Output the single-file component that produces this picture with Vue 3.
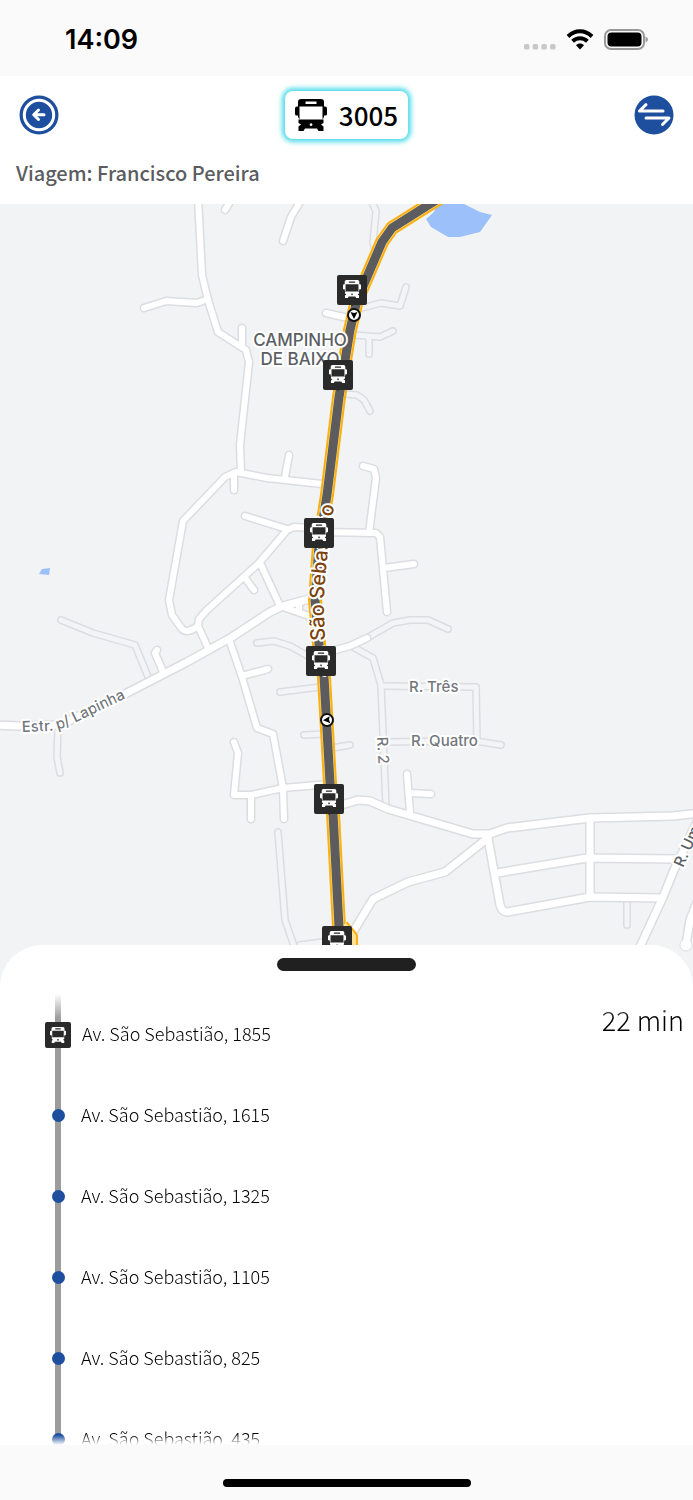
<template>
  <div class="screen">
    <svg class="symbols" aria-hidden="true">
      <symbol id="bus" viewBox="0 0 32 32">
        <path
          fill="currentColor"
          fill-rule="evenodd"
          d="M6 0h20q3 0 3 3v4.500h1q2 0 2 2V15q0 1.500-1.500 1.500H29V18l-1.500 2.500h-23L3 18v-1.500H1.500Q0 16.500 0 15V9.500q0-2 2-2h1V3q0-3 3-3zM10.500 2.500v2.500h11V2.500zM4.500 7.500v13h23v-13z"
        />
        <path
          fill="currentColor"
          fill-rule="evenodd"
          d="M3.500 20.500h25V24L26 25.500l2.500 2V32h-5l-1.500-2.500H10L8.500 32h-5v-4.500l2.500-2L3.500 24zM16 24.200a1.400 1.400 0 1 0 .1 0z"
        />
      </symbol>
    </svg>

    <div class="status">
      <span class="clock">14:09</span>
      <div class="status-icons">
        <svg class="signal" viewBox="0 0 32 6">
          <rect v-for="n in 4" :key="n" :x="(n - 1) * 8.7" width="5.400" height="5.400" rx="1.500" />
        </svg>
        <svg class="wifi" viewBox="0 0 28 21">
          <path d="M2 7.500C9 .6 19 .6 26 7.500" />
          <path d="M6.600 12.300c4.300-4 10.500-4 14.800 0" />
          <path class="wifi-dot" d="M14 20.500l-4-4.200c2-2.400 6-2.400 8 0z" />
        </svg>
        <svg class="battery" viewBox="0 0 45 21">
          <rect class="battery-case" x="1" y="1" width="39" height="19" rx="6" />
          <rect x="3.500" y="3.500" width="34" height="14" rx="4" />
          <path class="battery-tip" d="M41.500 7.500q2.500 1 2.500 3t-2.500 3z" />
        </svg>
      </div>
    </div>

    <header class="header">
      <div class="bar">
        <button class="round-btn" aria-label="Voltar">
          <svg viewBox="-20 -20 40 40">
            <circle class="blue" r="19.500" />
            <circle class="ring" r="14.700" />
            <path class="back-arrow" d="M5-.3H-5M-.5-5-5.300-.3-.5 4.500" />
          </svg>
        </button>
        <div class="line-badge">
          <svg><use href="#bus" /></svg>
          <span>3005</span>
        </div>
        <button class="round-btn" aria-label="Inverter sentido">
          <svg viewBox="-20 -20 40 40">
            <circle class="blue" r="19.500" />
            <path class="swap-arrow" d="M9-4H-14.500L-8-10.300M-8 3H15L8.500 9.500" />
          </svg>
        </button>
      </div>
      <p class="trip">Viagem: Francisco Pereira</p>
    </header>

    <svg class="map" viewBox="0 204 693 790">
      <path class="water" d="M436 204h28l16 8 12 3-12 17-20 5h-12l-17-10-5-8 8-7z" />
      <path class="water" d="M39 574l3-5 8-1-1 7z" />

      <g class="casing minor"><path v-for="d in minorRoads" :key="d" :d="d" /></g>
      <g class="fill minor"><path v-for="d in minorRoads" :key="d" :d="d" /></g>
      <g class="casing street"><path v-for="d in streets" :key="d" :d="d" /></g>
      <g class="casing main"><path v-for="d in mainRoads" :key="d" :d="d" /></g>
      <circle class="cul-de-sac" cx="686" cy="945" r="6" />
      <g class="fill street"><path v-for="d in streets" :key="d" :d="d" /></g>
      <g class="fill main"><path v-for="d in mainRoads" :key="d" :d="d" /></g>

      <path class="avenue-edge" :d="avenue" />
      <path class="avenue-edge" d="M342 926L351 937V960" />
      <path class="avenue-fill" :d="avenue" />
      <path class="avenue-fill" d="M342 926L351 937V960" />
      <path class="route" :d="avenue" />

      <path id="sebastiao" fill="none" d="M324 700L325 640Q323 600 325 580L328 550L334 505" />
      <path id="lapinha" fill="none" d="M22 732L48 731Q60 730 70 725L128 697" />

      <g class="label district">
        <text x="300" y="346">CAMPINHO</text>
        <text x="300" y="365">DE BAIXO</text>
      </g>
      <g class="label">
        <text x="409" y="692">R. Três</text>
        <text x="411" y="746">R. Quatro</text>
        <text transform="translate(377 737) rotate(87)">R. 2</text>
        <text class="dark" transform="translate(683 868) rotate(-66)">R. Um</text>
        <text><textPath href="#lapinha">Estr. p/ Lapinha</textPath></text>
      </g>
      <text class="label avenue-name">
        <textPath href="#sebastiao" startOffset="100%">Av. São Sebastião</textPath>
      </text>

      <g v-for="a in arrows" :key="a.y" :transform="`translate(${a.x} ${a.y}) rotate(${a.turn})`">
        <circle class="arrow-disc" r="6" />
        <path d="M0 4L-3.500-3 0-2 3.500-3z" />
      </g>
      <g v-for="p in pins" :key="p.y" :transform="`translate(${p.x} ${p.y})`">
        <path class="pin" d="M2 0h26q2 0 2 2v26q0 2-2 2H16l-1 1-1-1H2q-2 0-2-2V2q0-2 2-2z" />
        <use class="pin-bus" href="#bus" x="6" y="5" width="18" height="18" />
      </g>
    </svg>

    <section class="sheet">
      <button class="handle" aria-label="Expandir paradas"></button>
      <div class="panel">
        <ul class="stops">
          <li v-for="(stop, i) in stops" :key="stop" :class="{ current: i === 0 }">
            <span class="mark">
              <span v-if="i === 0" class="stop-bus"><svg><use href="#bus" /></svg></span>
              <span v-else class="dot"></span>
            </span>
            <span class="address">{{ stop }}</span>
          </li>
        </ul>
        <span class="eta">22 min</span>
      </div>
    </section>

    <footer class="home"><span class="home-bar"></span></footer>
  </div>
</template>

<script setup>
import { ref } from "vue";

const stops = ref([
  "Av. São Sebastião, 1855",
  "Av. São Sebastião, 1615",
  "Av. São Sebastião, 1325",
  "Av. São Sebastião, 1105",
  "Av. São Sebastião, 825",
  "Av. São Sebastião, 435",
]);

const pins = [
  { x: 337, y: 275 },
  { x: 323, y: 360 },
  { x: 304, y: 518 },
  { x: 306, y: 646 },
  { x: 314, y: 784 },
  { x: 322, y: 926 },
];

const arrows = [
  { x: 354, y: 315, turn: 0 },
  { x: 327, y: 720, turn: 85 },
];

const avenue =
  "M446 194L430 204L392 228L382 242L367 277L357 300L350 330L339 397L327 495L319 545L315 600L320 655L324 677L330 783L333 813L339 927L341 960";

// unpaved lanes, drawn with only an outline
const minorRoads = [
  "M371 200L376 211L373 243L376 252",
  "M362 308L381 303L400 306L406 287",
  "M354 335L380 337L393 331",
  "M369 338V354",
  "M345 394L357 395L364 400L370 411",
  "M58 728L57 757L60 773",
  "M61 620L93 633L135 645L149 679",
  "M280 692L320 687",
  "M304 735L325 734",
  "M332 748L350 745",
  "M257 643L274 641L290 646L308 656",
  "M367 638L393 623L410 620L428 620L448 629",
  "M353 647L373 658L381 685L386 806",
  "M381 686L476 687L477 740",
  "M383 742L475 741L501 745",
  "M278 832L285 920L294 946L300 960",
  "M300 945L330 941",
  "M627 900V925",
];

const streets = [
  "M198 198L202 275L208 300L218 332L246 350L249 362L240 445L241 472",
  "M144 308L166 301L197 303L208 299",
  "M242 328V346",
  "M231 200L225 210",
  "M300 202L291 217L283 241",
  "M326 313L348 318",
  "M322 484L267 478L236 472L225 477L183 521L169 600L172 615L182 629Q187 634 198 626",
  "M285 477L289 455",
  "M234 473V490",
  "M245 516L287 529",
  "M313 528L294 527L287 530L259 563L207 610L199 619L198 626L209 650",
  "M261 565L280 606",
  "M245 578L254 590",
  "M320 532L376 533L380 537L387 612",
  "M369 533L376 478L374 469L363 466",
  "M384 568L414 564",
  "M157 650L155 653L164 674",
  "M229 639L242 677L257 728L273 734L283 788L284 819",
  "M242 676L268 669",
  "M234 742L238 753L234 795H251L283 788L330 784",
  "M251 795V819",
  "M328 652L350 646L367 638",
  "M407 774L410 812",
  "M409 793L431 794",
  "M299 603V612",
  "M283 607L312 617",
];

const mainRoads = [
  "M-5 725L20 726L60 725L127 693L187 662L232 637L270 612L283 606L317 597",
  "M338 806L358 800L370 801L388 809L473 834H490L507 828L590 818L673 816L700 813",
  "M350 937L373 899L408 882L445 872L488 838",
  "M488 838L500 905Q502 912 507 912L590 897L662 898",
  "M497 873L587 858L675 859",
  "M590 818V897",
  "M697 822L674 870L663 897L632 964",
  "M698 900L690 920L686 945",
];
</script>

<style>
body {
  margin: 0;
}
</style>

<style scoped>
.screen {
  display: flex;
  flex-direction: column;
  height: 100vh;
  background-color: #fff;
  color: #222;
  font-family: "Noto Sans CJK SC", "Noto Sans", sans-serif;
}

.symbols {
  position: absolute;
  width: 0;
  height: 0;
}

.status {
  display: flex;
  flex: none;
  align-items: center;
  justify-content: space-between;
  height: 76px;
  padding: 3px 44px 0 65px;
  box-sizing: border-box;
  background-color: #fafafa;
  color: #000;
}

.clock {
  font-family: Inter, sans-serif;
  font-size: 27px;
  font-weight: 600;
}

.status-icons {
  display: flex;
  align-items: center;
  gap: 10px;
}

.signal {
  width: 32px;
  height: 6px;
  margin-top: 14px;
  fill: #c8c8c8;
}

.wifi {
  width: 28px;
  height: 21px;
  fill: none;
  stroke: #000;
  stroke-width: 4;
}

.wifi-dot {
  fill: #000;
  stroke: none;
}

.battery {
  width: 45px;
  height: 21px;
}

.battery-case {
  fill: none;
  stroke: #999;
  stroke-width: 2;
}

.battery-tip {
  fill: #999;
}

.header {
  flex: none;
  height: 128px;
}

.bar {
  display: flex;
  align-items: center;
  justify-content: space-between;
  height: 78px;
  padding: 0 19px;
}

.round-btn {
  width: 40px;
  height: 40px;
  padding: 0;
  border: none;
  background: none;
  cursor: pointer;
}

.round-btn svg {
  display: block;
  width: 40px;
  height: 40px;
}

.blue {
  fill: #1e4f9e;
}

.ring {
  fill: none;
  stroke: #fff;
  stroke-width: 3;
}

.back-arrow,
.swap-arrow {
  fill: none;
  stroke: #fff;
  stroke-width: 3;
  stroke-linecap: round;
  stroke-linejoin: round;
}

.line-badge {
  display: flex;
  align-items: center;
  gap: 12px;
  height: 48px;
  padding: 0 10px;
  border-radius: 8px;
  box-shadow: 0 0 5px 3px #4fdbe8;
  color: #000;
  font-size: 26px;
  font-weight: 500;
  line-height: 48px;
}

.line-badge svg {
  width: 32px;
  height: 32px;
}

.trip {
  margin: 0;
  padding-left: 16px;
  color: #5b5c60;
  font-size: 20px;
  font-weight: 500;
  line-height: 38px;
}

.map {
  display: block;
  flex: none;
  width: 100%;
  background-color: #f1f3f5;
}

.water {
  fill: #9cc0f9;
}

.casing,
.fill {
  fill: none;
  stroke-linecap: round;
  stroke-linejoin: round;
}

.casing {
  stroke: #dcdde1;
}

.fill {
  stroke: #fff;
}

.casing.minor {
  stroke-width: 8;
}

.fill.minor {
  stroke: #f3f4f6;
  stroke-width: 5;
}

.casing.street {
  stroke-width: 9;
}

.fill.street {
  stroke-width: 6;
}

.casing.main {
  stroke-width: 10;
}

.fill.main {
  stroke-width: 7;
}

.cul-de-sac {
  fill: #fff;
  stroke: #dcdde1;
}

.avenue-edge,
.avenue-fill,
.route {
  fill: none;
  stroke-linejoin: round;
}

.avenue-edge {
  stroke: #fcb010;
  stroke-width: 14;
}

.avenue-fill {
  stroke: #fde293;
  stroke-width: 10;
}

.route {
  stroke: #5c5c5f;
  stroke-width: 9;
}

.label {
  fill: #73777d;
  stroke: #fff;
  stroke-width: 4;
  stroke-linejoin: round;
  paint-order: stroke;
  font-family: Inter, sans-serif;
  font-size: 15px;
  font-weight: 500;
}

.district {
  fill: #5b5f65;
  font-size: 17px;
  text-anchor: middle;
}

.dark {
  fill: #5b5f65;
}

.avenue-name {
  fill: #7c4208;
  font-size: 20px;
  text-anchor: end;
}

.arrow-disc {
  fill: #fff;
  stroke: #111;
  stroke-width: 2;
}

.pin {
  fill: #2a2a2a;
}

.pin-bus {
  color: #fff;
}

.sheet {
  display: flex;
  position: relative;
  flex: 1;
  flex-direction: column;
  align-items: center;
  gap: 23px;
  min-height: 0;
  margin-top: -49px;
  padding-top: 13px;
  border-radius: 42px 42px 0 0;
  background-color: #fff;
}

.handle {
  flex: none;
  width: 20%;
  height: 13px;
  padding: 0;
  border: none;
  border-radius: 7px;
  background-color: #202020;
}

.panel {
  display: flex;
  flex: 1;
  justify-content: space-between;
  width: 100%;
  min-height: 0;
  overflow: hidden;
  mask-image: linear-gradient(transparent, #000 24px, #000 calc(100% - 10px), transparent);
}

.stops {
  margin: 0;
  padding: 0 0 0 44px;
  list-style: none;
}

.stops li {
  display: flex;
  align-items: center;
  gap: 9px;
  height: 81px;
}

.stops .current {
  gap: 10px;
}

/* the gray line runs behind each mark */
.mark {
  display: flex;
  align-items: center;
  justify-content: center;
  width: 28px;
  height: 81px;
  background: linear-gradient(#9c9c9c, #9c9c9c) center / 6px 100% no-repeat;
}

.dot {
  width: 13px;
  height: 13px;
  border-radius: 50%;
  background-color: #1e4f9e;
}

.stop-bus {
  display: flex;
  align-items: center;
  justify-content: center;
  width: 26px;
  height: 26px;
  border-radius: 2px;
  background-color: #2a2a2a;
  color: #fff;
}

.stop-bus svg {
  width: 16px;
  height: 16px;
}

.address {
  padding-bottom: 4px;
  color: #000;
  font-size: 18px;
  font-weight: 300;
  line-height: 28px;
}

.eta {
  padding-right: 9px;
  color: #000;
  font-size: 27px;
  font-weight: 300;
  line-height: 52px;
}

.home {
  display: flex;
  flex: none;
  align-items: center;
  justify-content: center;
  height: 55px;
  padding-top: 20px;
  box-sizing: border-box;
  background-color: #fafafa;
}

.home-bar {
  width: 248px;
  height: 8px;
  border-radius: 4px;
  background-color: #000;
}
</style>
